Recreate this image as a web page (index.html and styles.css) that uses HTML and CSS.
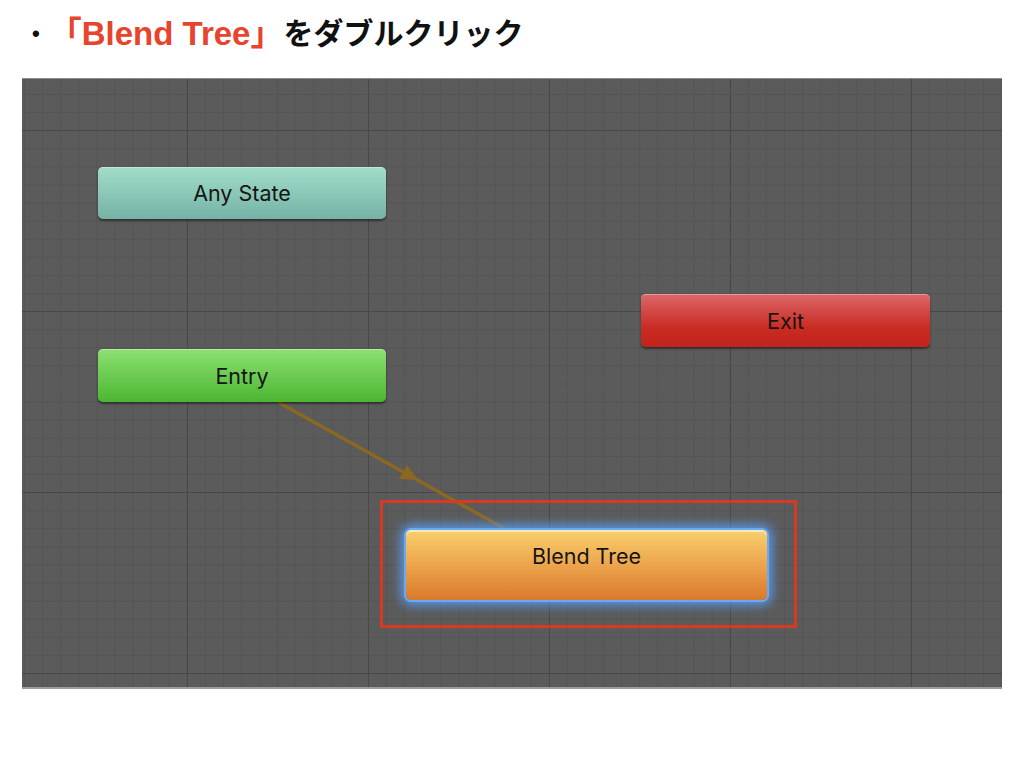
FILE: index.html
```html
<!DOCTYPE html>
<html lang="ja">
<head>
  <meta charset="UTF-8">
  <title>Blend Tree</title>
  <link rel="stylesheet" href="styles.css">
</head>
<body>

  <h1 class="title">
    <span class="bullet">•</span>
    <span class="accent">「Blend Tree」</span>をダブルクリック
  </h1>

  <div class="graph">
    <svg class="links" width="980" height="611" viewBox="0 0 980 611">
      <line x1="256" y1="324" x2="485" y2="452" stroke="#8b6822" stroke-width="3.5"/>
      <polygon points="396,402 377,401 385,387" fill="#8b6822"/>
    </svg>

    <div class="node any-state">Any State</div>
    <div class="node entry">Entry</div>
    <div class="node exit">Exit</div>
    <div class="node blend-tree">Blend Tree</div>

    <div class="highlight"></div>
  </div>

</body>
</html>
```

FILE: styles.css
```css
* {
  box-sizing: border-box;
}

body {
  margin: 0;
  background: #fff;
  font-family: 'Liberation Sans', Arial, 'Noto Sans CJK JP', sans-serif;
}

.title {
  margin: 0;
  height: 78px;
  padding: 0 0 10px 32px;
  font-size: 30px;
  font-weight: bold;
  color: #111;
  font-family: 'Liberation Sans', 'Noto Sans CJK JP', sans-serif;
  line-height: 40px;
  display: flex;
  align-items: center;
}

.bullet {
  font-size: 22px;
  margin-right: 17px;
}

.accent {
  color: #e8432c;
  font-size: 33px;
  margin-left: -8px;
}

.graph {
  position: relative;
  margin-left: 22px;
  width: 980px;
  height: 611px;
  border-top: 1px solid #8d8d8d;
  border-bottom: 2px solid #9c9c9c;
  background-color: #5b5b5b;
  background-image:
    linear-gradient(to right, #484848 1px, transparent 1px),
    linear-gradient(to bottom, #484848 1px, transparent 1px),
    linear-gradient(to right, #545454 1px, transparent 1px),
    linear-gradient(to bottom, #545454 1px, transparent 1px);
  background-size: 181px 181px, 181px 181px, 18.1px 18.1px, 18.1px 18.1px;
  background-position: 165px 51px, 165px 51px, 2px 15px, 2px 15px;
  overflow: hidden;
}

.links {
  position: absolute;
  left: 0;
  top: -1px;
}

.node {
  position: absolute;
  display: flex;
  align-items: center;
  justify-content: center;
  border-radius: 5px;
  font-family: Inter, 'Open Sans', sans-serif;
  font-size: 21.5px;
  color: #151515;
  box-shadow: inset 0 1px 0 rgba(255, 255, 255, 0.35), 0 2px 2px rgba(0, 0, 0, 0.45);
}

.any-state {
  left: 76px;
  top: 88px;
  width: 288px;
  height: 52px;
  background: linear-gradient(to bottom, #a0ddca, #76b3a6);
}

.entry {
  left: 76px;
  top: 270px;
  width: 288px;
  height: 53px;
  background: linear-gradient(to bottom, #8ce072, #4cb632);
}

.exit {
  left: 619px;
  top: 215px;
  width: 289px;
  height: 53px;
  background: linear-gradient(to bottom, #dc6868 0%, #c92a22 65%, #c2241c 100%);
}

.blend-tree {
  left: 384px;
  top: 451px;
  width: 361px;
  height: 70px;
  padding-bottom: 18px;
  background: linear-gradient(to bottom, #f8d06f 0%, #eea94f 45%, #db782c 100%);
  box-shadow: inset 0 2px 0 rgba(255, 245, 210, 0.7), 0 0 0 2px #68aaf8, 0 0 11px 5px rgba(90, 160, 250, 0.9);
}

.highlight {
  position: absolute;
  left: 358px;
  top: 421px;
  width: 417px;
  height: 128px;
  border: 3px solid #d63b22;
}
```
